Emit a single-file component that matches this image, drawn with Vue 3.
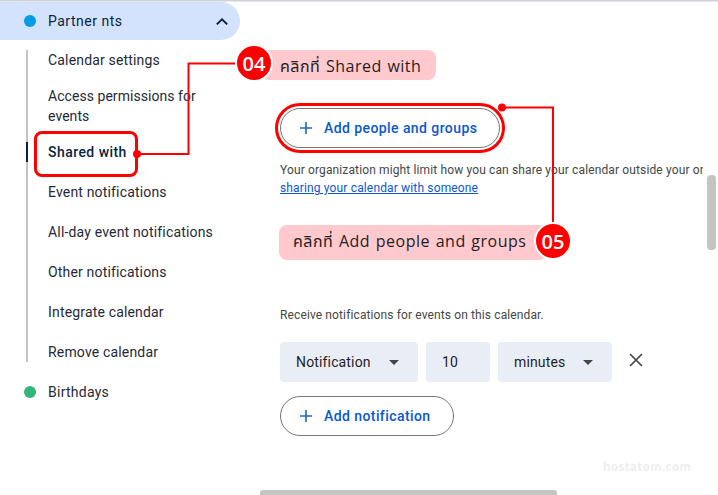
<script setup>
const items = [
  { label: 'Calendar settings' },
  { label: 'Access permissions for events', tall: true },
  { label: 'Shared with', active: true },
  { label: 'Event notifications' },
  { label: 'All-day event notifications' },
  { label: 'Other notifications' },
  { label: 'Integrate calendar' },
  { label: 'Remove calendar' },
]
</script>

<template>
  <div class="page">
    <div class="topline"></div>
    <div class="layout">
      <aside class="sidebar">
        <div class="cal-row open">
          <span class="dot blue"></span>
          <span class="cal-name">Partner nts</span>
          <svg class="chev" width="14" height="9" viewBox="0 0 14 9"><path d="M1.800 7.400 7 2.400l5.200 5" fill="none" stroke="#0b1f3f" stroke-width="2"/></svg>
        </div>
        <ul class="sub">
          <li v-for="i in items" :key="i.label" :class="{ tall: i.tall, active: i.active }">{{ i.label }}</li>
        </ul>
        <div class="cal-row">
          <span class="dot green"></span>
          <span class="cal-name">Birthdays</span>
        </div>
      </aside>

      <main class="main">
        <button class="pill wide"><svg width="12" height="12" viewBox="0 0 12 12"><path d="M6 0v12M0 6h12" stroke="#1a67d2" stroke-width="1.6"/></svg><span>Add people and groups</span></button>
        <p class="info">Your organization might limit how you can share your calendar outside your organization</p>
        <a class="link">sharing your calendar with someone</a>
        <p class="receive">Receive notifications for events on this calendar.</p>
        <div class="fields">
          <div class="field f1">Notification<i class="caret"></i></div>
          <div class="field f2">10</div>
          <div class="field f3">minutes<i class="caret"></i></div>
          <svg class="close" width="14" height="14" viewBox="0 0 14 14"><path d="M1 1l12 12M13 1 1 13" stroke="#444746" stroke-width="1.7"/></svg>
        </div>
        <button class="pill narrow"><svg width="12" height="12" viewBox="0 0 12 12"><path d="M6 0v12M0 6h12" stroke="#1a67d2" stroke-width="1.6"/></svg><span>Add notification</span></button>
      </main>
    </div>

    <div class="scroll-v"></div>
    <div class="scroll-h"></div>
    <div class="mark">hostatom.com</div>

    <!-- annotation overlay -->
    <div class="hl hl-shared"></div>
    <div class="hl hl-add"></div>
    <svg class="wires" width="718" height="495" viewBox="0 0 718 495">
      <path d="M137 154H188.500V63.500H240" fill="none" stroke="#f00" stroke-width="2"/>
      <path d="M502 107.500H553V235" fill="none" stroke="#f00" stroke-width="2"/>
      <circle cx="137" cy="154" r="4" fill="#f00"/>
      <circle cx="502" cy="107.500" r="4" fill="#f00"/>
    </svg>
    <div class="tag tag4">คลิกที่ Shared with</div>
    <div class="num num4">04</div>
    <div class="tag tag5">คลิกที่ Add people and groups</div>
    <div class="num num5">05</div>
  </div>
</template>

<style>
html, body { margin: 0; background: #fff; }
</style>

<style scoped>
.page {
  position: relative;
  width: 718px;
  height: 495px;
  overflow: hidden;
  background: #fff;
  font-family: Roboto, "Liberation Sans", sans-serif;
  color: #1f1f1f;
}
.topline { height: 2px; background: linear-gradient(#c4c7cf, #eef0f4); }
.layout { display: flex; }
.sidebar { width: 240px; flex: none; }
.cal-row {
  display: flex;
  align-items: center;
  height: 40px;
  padding-left: 24px;
  font-size: 14px;
  letter-spacing: .25px;
  color: #1f2937;
}
.cal-row.open {
  height: 38px;
  background: #d3e3fd;
  border-radius: 0 19px 19px 0;
  color: #0b1f3f;
  letter-spacing: .5px;
}
.dot { width: 12px; height: 12px; border-radius: 50%; margin-right: 12px; flex: none; }
.blue { background: #039be5; }
.green { background: #33b679; }
.chev { margin-left: auto; margin-right: 11px; }
.sub {
  list-style: none;
  margin: 10px 0 10px 26px;
  padding: 0;
  border-left: 2px solid #c4c4c4;
  width: 190px;
}
.sub li {
  position: relative;
  height: 40px;
  box-sizing: border-box;
  display: flex;
  align-items: center;
  padding-left: 20px;
  font-size: 14px;
  line-height: 20px;
  letter-spacing: .17px;
  color: #1f2937;
}
.sub li:first-child { height: 20px; }
.sub li.tall { margin-top: 16px; letter-spacing: .05px; }
.sub li.active { margin-top: 6px; }
.sub li:last-child { height: 20px; margin-top: 10px; }
.sub li.active { font-weight: 500; letter-spacing: .45px; color: #0b1f3f; }
.sub li.active::before {
  content: "";
  position: absolute;
  left: -2px;
  top: 10px;
  width: 2px;
  height: 20px;
  background: #0b1f3f;
}
.main {
  flex: none;
  width: 423px;
  margin-left: 40px;
  padding-top: 106px;
  overflow: hidden;
}
.pill {
  display: flex;
  align-items: center;
  gap: 12px;
  height: 40px;
  box-sizing: border-box;
  padding: 0 0 0 19px;
  background: #fff;
  border: 1px solid #747775;
  border-radius: 20px;
  font: 500 14px Roboto, "Liberation Sans", sans-serif;
  letter-spacing: .42px;
  color: #0b57d0;
}
.wide { width: 220px; }
.narrow { width: 174px; }
.info {
  margin: 13px 0 0;
  font-size: 12px;
  line-height: 18px;
  letter-spacing: .13px;
  white-space: nowrap;
  color: #444746;
}
.link {
  display: block;
  width: max-content;
  font-size: 12px;
  line-height: 18px;
  letter-spacing: .15px;
  color: #0b57d0;
  text-decoration: underline;
}
.receive {
  margin: 109px 0 0;
  font-size: 12px;
  line-height: 18px;
  letter-spacing: .12px;
  color: #444746;
}
.fields { display: flex; align-items: center; gap: 8px; margin: 18px 0 14px; height: 40px; }
.field {
  display: flex;
  align-items: center;
  height: 40px;
  box-sizing: border-box;
  padding-left: 16px;
  background: #e9edf6;
  border-radius: 4px;
  font-size: 14px;
  letter-spacing: .15px;
  color: #1f1f1f;
}
.f1 { width: 138px; }
.f2 { width: 64px; }
.f3 { width: 114px; }
.caret {
  width: 0;
  height: 0;
  margin-left: auto;
  margin-right: 19px;
  border-left: 5px solid transparent;
  border-right: 5px solid transparent;
  border-top: 5px solid #444746;
}
.close { margin-left: 9px; margin-top: -4px; }
.scroll-v {
  position: absolute;
  left: 707px;
  top: 175px;
  width: 9px;
  height: 75px;
  background: #c4c4c4;
  border-radius: 4px;
}
.scroll-h {
  position: absolute;
  left: 260px;
  top: 490px;
  width: 297px;
  height: 5px;
  background: #c4c4c4;
  border-radius: 3px 3px 0 0;
}
.mark {
  position: absolute;
  left: 603px;
  top: 459px;
  font: 700 11.500px "Open Sans", sans-serif;
  letter-spacing: .4px;
  color: #eeeeee;
}
.hl { position: absolute; box-sizing: border-box; border: 3px solid #f00; }
.hl-shared { left: 34px; top: 131px; width: 104px; height: 46px; border-radius: 8px; }
.hl-add { left: 275px; top: 103px; width: 230px; height: 50px; border-radius: 25px; }
.wires { position: absolute; left: 0; top: 0; }
.tag {
  position: absolute;
  box-sizing: border-box;
  display: flex;
  align-items: center;
  background: #ffc9ce;
  border-radius: 8px;
  font-family: "Open Sans", "Noto Sans", "Noto Sans Thai", sans-serif;
  font-size: 16px;
  letter-spacing: .5px;
  word-spacing: 1px;
  white-space: nowrap;
  color: #1f1f1f;
}
.tag4 { left: 260px; top: 50px; width: 176px; height: 30px; padding: 4px 0 0 20px; }
.tag5 { left: 279px; top: 225px; width: 268px; height: 35px; padding: 0 0 2px 14px; }
.num {
  position: absolute;
  box-sizing: border-box;
  width: 38px;
  height: 38px;
  display: flex;
  align-items: center;
  justify-content: center;
  background: #f00;
  border: 2px solid #fff;
  border-radius: 50%;
  font: 600 20px "Open Sans", sans-serif;
  color: #fff;
}
.num4 { left: 235px; top: 44px; }
.num5 { left: 534px; top: 222px; }
</style>
